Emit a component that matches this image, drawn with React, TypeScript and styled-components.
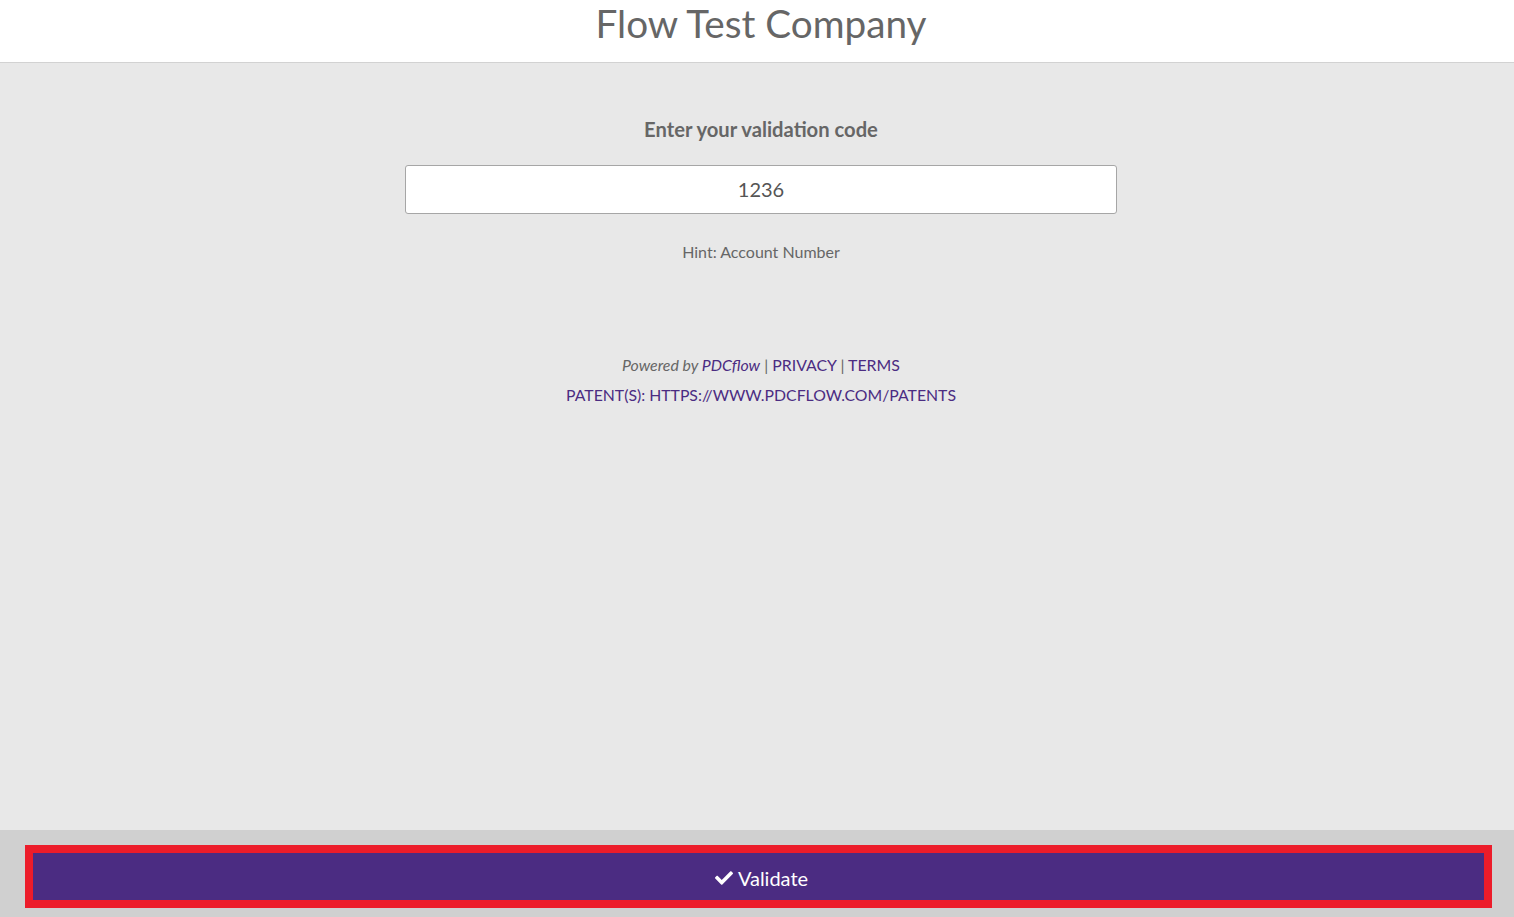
import React from "react";
import styled, { createGlobalStyle } from "styled-components";
import { FaCheck } from "react-icons/fa";

const Global = createGlobalStyle`
  html, body { margin: 0; padding: 0; height: 100%; }
  body { font-family: Lato, "Open Sans", Arial, sans-serif; background: #e8e8e8; }
  #root { min-height: 100vh; }
`;

const Page = styled.div`
  display: flex;
  flex-direction: column;
  min-height: 100vh;
`;

const Header = styled.header`
  background: #ffffff;
  border-bottom: 1px solid #d2d2d2;
  height: 62px;
  display: flex;
  justify-content: center;
  align-items: flex-end;
  padding-left: 8px;
  overflow: hidden;
`;

const Title = styled.h1`
  margin: 0 0 19px;
  font-size: 38.7px;
  font-weight: 400;
  line-height: 1;
  color: #666666;
`;

const Main = styled.main`
  flex: 1;
  display: flex;
  flex-direction: column;
  align-items: center;
  padding: 53px 0 0 8px;
`;

const Heading = styled.h2`
  margin: 0;
  font-size: 20.2px;
  font-weight: 700;
  color: #666666;
  line-height: 26px;
`;

const CodeInput = styled.input`
  box-sizing: border-box;
  margin-top: 23px;
  width: 712px;
  height: 49px;
  border: 1px solid #a6a6a6;
  border-radius: 3px;
  background: #ffffff;
  text-align: center;
  font-family: Lato, Arial, sans-serif;
  font-size: 20px;
  color: #555555;
  outline: none;
  caret-color: #333;
  padding: 0 0 2px;
`;

const Hint = styled.p`
  margin: 28px 0 0;
  font-size: 16px;
  color: #666666;
  line-height: 20px;
`;

const Legal = styled.div`
  margin-top: 93px;
  display: flex;
  flex-direction: column;
  align-items: center;
  gap: 10px;
  font-size: 15.9px;
  line-height: 20px;
  color: #666666;
`;

const Powered = styled.span`
  font-style: italic;
`;

const Link = styled.a<{ $italic?: boolean }>`
  color: #4b2c82;
  text-decoration: none;
  font-style: ${(p) => (p.$italic ? "italic" : "normal")};
`;

const Patents = styled(Link)`
  font-size: 15.8px;
`;

const Footer = styled.footer`
  background: #d0d0d0;
  height: 87px;
  box-sizing: border-box;
  padding: 15px 22px 9px 25px;
  display: flex;
`;

const ValidateButton = styled.button`
  flex: 1;
  background: #4b2c82;
  border: 8px solid #ec1c2a;
  color: #ffffff;
  font-family: Lato, Arial, sans-serif;
  font-size: 20px;
  display: flex;
  align-items: center;
  justify-content: center;
  gap: 5px;
  padding: 2px 0 0 6px;
  cursor: pointer;
  svg { width: 18px; height: 18px; }
`;

export default function App() {
  return (
    <>
      <Global />
      <Page>
        <Header>
          <Title>Flow Test Company</Title>
        </Header>
        <Main>
          <Heading>Enter your validation code</Heading>
          <CodeInput defaultValue="1236" autoFocus />
          <Hint>Hint: Account Number</Hint>
          <Legal>
            <div>
              <Powered>Powered by </Powered>
              <Link $italic href="#">PDCflow</Link> | <Link href="#">PRIVACY</Link> |{" "}
              <Link href="#">TERMS</Link>
            </div>
            <Patents href="#">PATENT(S): HTTPS://WWW.PDCFLOW.COM/PATENTS</Patents>
          </Legal>
        </Main>
        <Footer>
          <ValidateButton>
            <FaCheck />
            Validate
          </ValidateButton>
        </Footer>
      </Page>
    </>
  );
}
